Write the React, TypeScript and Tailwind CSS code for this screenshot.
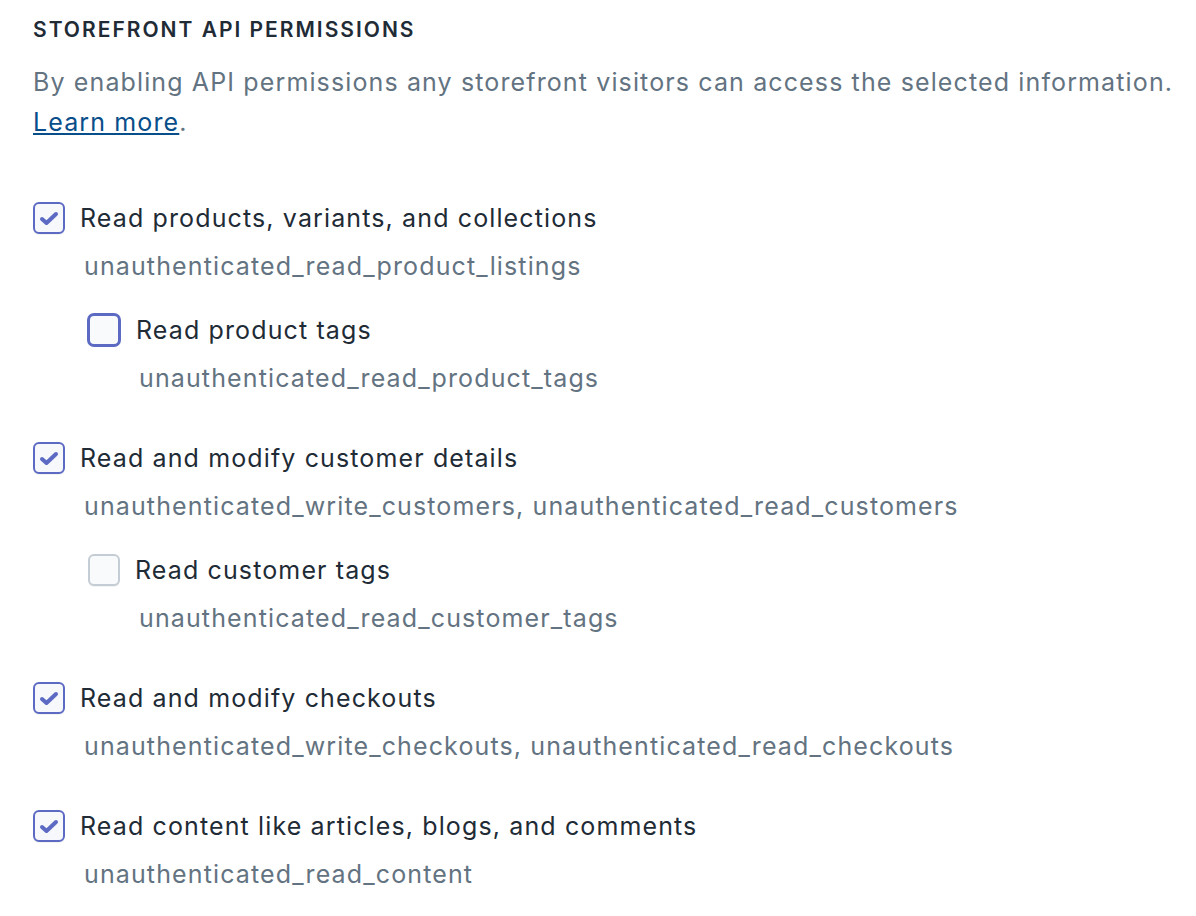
import React from 'react';

interface Permission {
  label: string;
  scope: string;
  checked: boolean;
  focused?: boolean;
  children?: Permission[];
}

const permissions: Permission[] = [
  {
    label: 'Read products, variants, and collections',
    scope: 'unauthenticated_read_product_listings',
    checked: true,
    children: [
      { label: 'Read product tags', scope: 'unauthenticated_read_product_tags', checked: false, focused: true },
    ],
  },
  {
    label: 'Read and modify customer details',
    scope: 'unauthenticated_write_customers, unauthenticated_read_customers',
    checked: true,
    children: [
      { label: 'Read customer tags', scope: 'unauthenticated_read_customer_tags', checked: false },
    ],
  },
  {
    label: 'Read and modify checkouts',
    scope: 'unauthenticated_write_checkouts, unauthenticated_read_checkouts',
    checked: true,
  },
  {
    label: 'Read content like articles, blogs, and comments',
    scope: 'unauthenticated_read_content',
    checked: true,
  },
];

const Checkbox: React.FC<{ checked: boolean; focused?: boolean }> = ({ checked, focused }) => {
  if (focused) {
    return (
      <span className="flex h-[34px] w-[34px] shrink-0 -ml-px rounded-[7px] border-[3px] border-[#5c6ac4] bg-[#f9fafb]" />
    );
  }
  if (checked) {
    return (
      <span className="flex h-[32px] w-[32px] shrink-0 items-center justify-center rounded-[6px] border-2 border-[#5c6ac4] bg-[#f7f8fc] shadow-[0_1px_0_rgba(22,29,37,0.05)]">
        <svg width="20" height="16" viewBox="0 0 20 16" fill="none" className="mt-[2px]">
          <path d="M3 8 L7.5 12 L17 3" stroke="#5c6ac4" strokeWidth="4" strokeLinecap="round" strokeLinejoin="round" />
        </svg>
      </span>
    );
  }
  return (
    <span className="flex h-[32px] w-[32px] shrink-0 rounded-[6px] border-2 border-[#c4cdd5] bg-[#f9fafb] shadow-[0_1px_0_rgba(22,29,37,0.06)]" />
  );
};

const PermissionItem: React.FC<{ item: Permission }> = ({ item }) => (
  <li>
    <label className="flex items-center gap-[15px] text-[#212b36]">
      <Checkbox checked={item.checked} focused={item.focused} />
      <span>{item.label}</span>
    </label>
    <div className="mt-2 pl-[51px] text-[#637381]">{item.scope}</div>
    {item.children && (
      <ul className="mt-6 ml-[55px] flex flex-col gap-10">
        {item.children.map((child) => (
          <PermissionItem key={child.scope} item={child} />
        ))}
      </ul>
    )}
  </li>
);

export default function App() {
  return (
    <div
      className="min-h-screen bg-white pl-[33px] pt-[18px] text-[25px] leading-[40px] tracking-[0.045em]"
      style={{ fontFamily: 'Inter, "Noto Sans", sans-serif' }}
    >
      <h2 className="text-[21px] font-semibold uppercase leading-[24px] tracking-[0.095em] text-[#212b36]">
        Storefront API permissions
      </h2>
      <p className="mt-5 text-[#637381]">
        By enabling API permissions any storefront visitors can access the selected information.
        <br />
        <a href="#" className="text-[#084e8a] underline">
          Learn more
        </a>
        .
      </p>
      <ul className="mt-14 flex flex-col gap-10">
        {permissions.map((p) => (
          <PermissionItem key={p.scope} item={p} />
        ))}
      </ul>
    </div>
  );
}
